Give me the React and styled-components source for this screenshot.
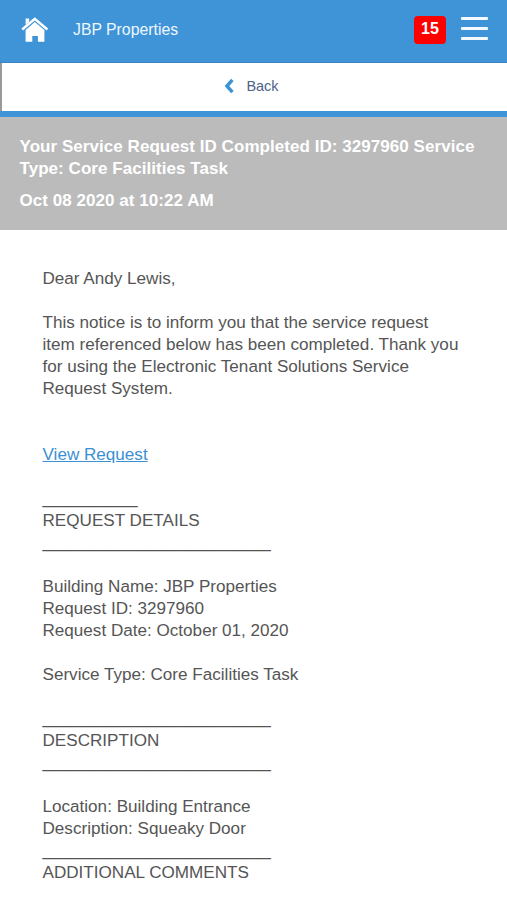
import * as React from "react";
import styled, { createGlobalStyle } from "styled-components";

export default function ServiceRequestPage() {
  return (
    <Page>
      <GlobalStyle />
      <TopBar>
        <HomeLink aria-label="Home">
          <svg width="28" height="28" viewBox="0 0 28 28" fill="#fff">
            <path d="M4.6 2.6h3.5v3.2L4.6 8.8z" />
            <path d="M13.8 1.2 27.2 12.6l-1.6 1.8L13.8 4.4 2 14.4.4 12.6z" />
            <path d="M13.8 6 23.4 14v11.8h-6.5V20h-5.6v5.8H4.6V14z" />
          </svg>
        </HomeLink>
        <SiteName>JBP Properties</SiteName>
        <Badge>15</Badge>
        <MenuButton aria-label="Menu">
          <MenuLine />
          <MenuLine />
          <MenuLine />
        </MenuButton>
      </TopBar>
      <BackBar>
        <svg width="10" height="16" viewBox="0 0 10 16" fill="none" stroke="#3b93d6" strokeWidth="3.4">
          <path d="M8.4 1.8 2.9 8l5.5 6.2" />
        </svg>
        <BackLabel>Back</BackLabel>
      </BackBar>
      <TitleBlock>
        <Title>
          Your Service Request ID Completed ID: 3297960 Service Type: Core Facilities Task
        </Title>
        <TitleDate>Oct 08 2020 at 10:22 AM</TitleDate>
      </TitleBlock>
      <Message>
        <Line>Dear Andy Lewis,</Line>
        <Line $before={1}>
          This notice is to inform you that the service request
          <br />
          item referenced below has been completed. Thank you
          <br />
          for using the Electronic Tenant Solutions Service
          <br />
          Request System.
        </Line>
        <Line $before={2}>
          <RequestLink>View Request</RequestLink>
        </Line>
        <Line $before={1}>__________</Line>
        <Line>REQUEST DETAILS</Line>
        <Line>________________________</Line>
        <Line $before={1}>Building Name: JBP Properties</Line>
        <Line>Request ID: 3297960</Line>
        <Line>Request Date: October 01, 2020</Line>
        <Line $before={1}>Service Type: Core Facilities Task</Line>
        <Line $before={1}>________________________</Line>
        <Line>DESCRIPTION</Line>
        <Line>________________________</Line>
        <Line $before={1}>Location: Building Entrance</Line>
        <Line>Description: Squeaky Door</Line>
        <Line>________________________</Line>
        <Line>ADDITIONAL COMMENTS</Line>
      </Message>
    </Page>
  );
}

const GlobalStyle = createGlobalStyle`
  * {
    box-sizing: border-box;
  }
  body {
    margin: 0;
    background-color: #fff;
    font-family: "Liberation Sans", Arial, sans-serif;
  }
`;

const Page = styled.div`
  display: flex;
  flex-direction: column;
  height: 900px;
  overflow: hidden;
`;

const TopBar = styled.header`
  background-color: #3e94d6;
  border-bottom: 1px solid #3984c1;
  display: flex;
  flex-shrink: 0;
  align-items: center;
  height: 63px;
  padding: 0 19px 3px 21px;
`;

const HomeLink = styled.div`
  display: flex;
  width: 28px;
`;

const SiteName = styled.div`
  color: #eef7ff;
  font-size: 15.8px;
  margin-left: 24px;
  flex-grow: 1;
`;

const Badge = styled.div`
  background-color: #fe0000;
  border-radius: 4px;
  color: #fff;
  font-size: 16px;
  font-weight: 700;
  line-height: 26px;
  text-align: center;
  width: 32px;
  height: 28px;
`;

const MenuButton = styled.div`
  display: flex;
  flex-direction: column;
  gap: 7px;
  margin-left: 15px;
  margin-bottom: 2px;
  width: 27px;
`;

const MenuLine = styled.div`
  background-color: #f4faff;
  border-radius: 1px;
  height: 3px;
`;

const BackBar = styled.div`
  background-color: #fff;
  border-left: 2px solid #999;
  display: flex;
  flex-shrink: 0;
  align-items: center;
  justify-content: center;
  gap: 12px;
  height: 48px;
  padding: 0 6px 2px 0;
`;

const BackLabel = styled.div`
  color: #4d6389;
  font-size: 14.5px;
`;

const TitleBlock = styled.div`
  background-color: #bbb;
  border-top: 6px solid #3e94d6;
  color: #fff;
  flex-shrink: 0;
  font-size: 17px;
  font-weight: 700;
  letter-spacing: 0.05px;
  line-height: 22px;
  height: 119px;
  padding: 19px 19px 0 19.5px;
`;

const Title = styled.div``;

const TitleDate = styled.div`
  margin-top: 10px;
`;

const Message = styled.div`
  color: #555;
  font-size: 17.1px;
  line-height: 22px;
  padding: 38px 42px 0 42.5px;
`;

/* $before is the number of blank lines above */
const Line = styled.div`
  margin-top: ${(props) => (props.$before || 0) * 22}px;
  white-space: nowrap;
`;

const RequestLink = styled.span`
  color: #3b8fd3;
  text-decoration: underline;
`;
